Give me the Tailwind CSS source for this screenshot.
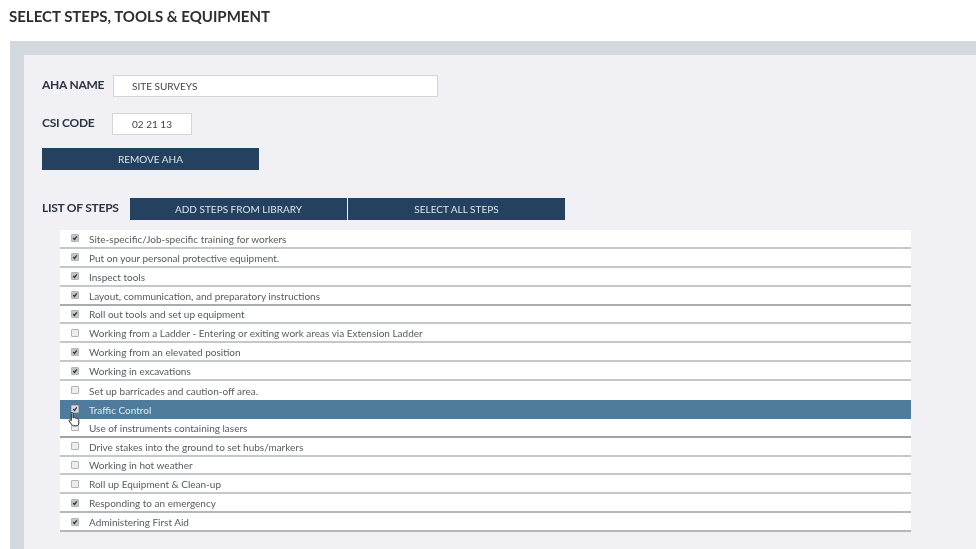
<!DOCTYPE html>
<html lang="en">
<head>
<meta charset="utf-8">
<title>Select Steps, Tools & Equipment</title>
<script src="https://cdn.jsdelivr.net/npm/@tailwindcss/browser@4"></script>
</head>
<body class="bg-white overflow-hidden font-['Lato','Liberation_Sans',sans-serif]">
<div class="w-[976px] h-[549px] overflow-hidden blur-[0.35px]">
  <h1 class="h-[41px] pl-[9px] pt-[7px] text-[15px] leading-[18px] font-bold text-[#2b2f33]">SELECT STEPS, TOOLS &amp; EQUIPMENT</h1>
  <div class="ml-[10px] h-[508px] bg-[#d3d7de] pl-[14px] pt-[14px]">
    <div class="h-[494px] bg-[#f0f0f5] pl-[18px] pt-[20px]">
      <div class="flex items-center h-[22px] gap-[8px]">
        <span class="w-[63px] pb-[2px] text-[12px] tracking-[-0.25px] font-bold text-[#2b3440] whitespace-nowrap">AHA NAME</span>
        <div class="w-[325px] h-[22px] bg-white border border-[#d4d6da] pl-[18px] text-[10px] leading-[20px] text-[#444]">SITE SURVEYS</div>
      </div>
      <div class="flex items-center h-[22px] gap-[8px] mt-[16px]">
        <span class="w-[62px] pb-[2px] text-[12px] tracking-[-0.25px] font-bold text-[#2b3440] whitespace-nowrap">CSI CODE</span>
        <div class="w-[80px] h-[22px] bg-white border border-[#d4d6da] text-center text-[10px] leading-[20px] text-[#444]">02 21 13</div>
      </div>
      <div class="w-[217px] h-[22px] mt-[13px] bg-[#24415f] text-center text-[10px] leading-[22px] text-[#dfe4ea]">REMOVE AHA</div>
      <div class="flex items-center h-[22px] mt-[28px]">
        <span class="w-[88px] pb-[2px] text-[12px] tracking-[-0.25px] font-bold text-[#2b3440] whitespace-nowrap">LIST OF STEPS</span>
        <div class="w-[217px] h-[22px] bg-[#24415f] text-center text-[10px] leading-[22px] text-[#dfe4ea]">ADD STEPS FROM LIBRARY</div>
        <div class="w-[217px] h-[22px] ml-[1px] bg-[#24415f] text-center text-[10px] leading-[22px] text-[#dfe4ea]">SELECT ALL STEPS</div>
      </div>
      <div class="relative ml-[18px] mt-[10px] w-[851px] flex flex-col text-[10px] text-[#555b60]">
        <div class="flex items-center h-[18.875px] bg-white border-b-2 border-[#c4c7cc] pl-[11px] gap-[10px]"><span class="flex items-center justify-center w-[8px] h-[8px] rounded-[1px] bg-[#c3c6ca] border border-[#b4b4b4]"><svg viewBox="0 0 10 10" class="w-[8px] h-[8px]"><path d="M2 5l2.2 2.4L8 2.2" fill="none" stroke="#2a2e33" stroke-width="2"/></svg></span><span class="pt-[2px]">Site-specific/Job-specific training for workers</span></div>
        <div class="flex items-center h-[18.875px] bg-white border-b-2 border-[#c4c7cc] pl-[11px] gap-[10px]"><span class="flex items-center justify-center w-[8px] h-[8px] rounded-[1px] bg-[#c3c6ca] border border-[#b4b4b4]"><svg viewBox="0 0 10 10" class="w-[8px] h-[8px]"><path d="M2 5l2.2 2.4L8 2.2" fill="none" stroke="#2a2e33" stroke-width="2"/></svg></span><span class="pt-[2px]">Put on your personal protective equipment.</span></div>
        <div class="flex items-center h-[18.875px] bg-white border-b-2 border-[#c4c7cc] pl-[11px] gap-[10px]"><span class="flex items-center justify-center w-[8px] h-[8px] rounded-[1px] bg-[#c3c6ca] border border-[#b4b4b4]"><svg viewBox="0 0 10 10" class="w-[8px] h-[8px]"><path d="M2 5l2.2 2.4L8 2.2" fill="none" stroke="#2a2e33" stroke-width="2"/></svg></span><span class="pt-[2px]">Inspect tools</span></div>
        <div class="flex items-center h-[18.875px] bg-white border-b-2 border-[#a9acb1] pl-[11px] gap-[10px]"><span class="flex items-center justify-center w-[8px] h-[8px] rounded-[1px] bg-[#c3c6ca] border border-[#b4b4b4]"><svg viewBox="0 0 10 10" class="w-[8px] h-[8px]"><path d="M2 5l2.2 2.4L8 2.2" fill="none" stroke="#2a2e33" stroke-width="2"/></svg></span><span class="pt-[2px]">Layout, communication, and preparatory instructions</span></div>
        <div class="flex items-center h-[18.875px] bg-white border-b-2 border-[#c4c7cc] pl-[11px] gap-[10px]"><span class="flex items-center justify-center w-[8px] h-[8px] rounded-[1px] bg-[#c3c6ca] border border-[#b4b4b4]"><svg viewBox="0 0 10 10" class="w-[8px] h-[8px]"><path d="M2 5l2.2 2.4L8 2.2" fill="none" stroke="#2a2e33" stroke-width="2"/></svg></span><span class="pt-[2px]">Roll out tools and set up equipment</span></div>
        <div class="flex items-center h-[18.875px] bg-white border-b-2 border-[#c4c7cc] pl-[11px] gap-[10px]"><span class="w-[8px] h-[8px] rounded-[1px] bg-[#eceded] border border-[#b4b4b4]"></span><span class="pt-[2px]">Working from a Ladder - Entering or exiting work areas via Extension Ladder</span></div>
        <div class="flex items-center h-[18.875px] bg-white border-b-2 border-[#c4c7cc] pl-[11px] gap-[10px]"><span class="flex items-center justify-center w-[8px] h-[8px] rounded-[1px] bg-[#c3c6ca] border border-[#b4b4b4]"><svg viewBox="0 0 10 10" class="w-[8px] h-[8px]"><path d="M2 5l2.2 2.4L8 2.2" fill="none" stroke="#2a2e33" stroke-width="2"/></svg></span><span class="pt-[2px]">Working from an elevated position</span></div>
        <div class="flex items-center h-[18.875px] bg-white border-b-2 border-[#c4c7cc] pl-[11px] gap-[10px]"><span class="flex items-center justify-center w-[8px] h-[8px] rounded-[1px] bg-[#c3c6ca] border border-[#b4b4b4]"><svg viewBox="0 0 10 10" class="w-[8px] h-[8px]"><path d="M2 5l2.2 2.4L8 2.2" fill="none" stroke="#2a2e33" stroke-width="2"/></svg></span><span class="pt-[2px]">Working in excavations</span></div>
        <div class="flex items-center h-[18.875px] bg-white pl-[11px] gap-[10px]"><span class="w-[8px] h-[8px] rounded-[1px] bg-[#eceded] border border-[#b4b4b4]"></span><span class="pt-[2px]">Set up barricades and caution-off area.</span></div>
        <div class="flex items-center h-[18.875px] bg-[#4f7c9c] pl-[11px] gap-[10px] text-[#dfe9f0]"><span class="flex items-center justify-center w-[8px] h-[8px] rounded-[1px] bg-[#d5d9dd] border border-[#b4b4b4]"><svg viewBox="0 0 10 10" class="w-[8px] h-[8px]"><path d="M2 5l2.2 2.4L8 2.2" fill="none" stroke="#2a2e33" stroke-width="2"/></svg></span><span class="pt-[2px]">Traffic Control</span></div>
        <div class="flex items-center h-[18.875px] bg-white border-b-2 border-[#a0a2a6] pl-[11px] gap-[10px]"><span class="w-[8px] h-[8px] rounded-[1px] bg-[#eceded] border border-[#b4b4b4]"></span><span class="pt-[2px]">Use of instruments containing lasers</span></div>
        <div class="flex items-center h-[18.875px] bg-white border-b-2 border-[#c4c7cc] pl-[11px] gap-[10px]"><span class="w-[8px] h-[8px] rounded-[1px] bg-[#eceded] border border-[#b4b4b4]"></span><span class="pt-[2px]">Drive stakes into the ground to set hubs/markers</span></div>
        <div class="flex items-center h-[18.875px] bg-white border-b-2 border-[#c4c7cc] pl-[11px] gap-[10px]"><span class="w-[8px] h-[8px] rounded-[1px] bg-[#eceded] border border-[#b4b4b4]"></span><span class="pt-[2px]">Working in hot weather</span></div>
        <div class="flex items-center h-[18.875px] bg-white border-b-2 border-[#c4c7cc] pl-[11px] gap-[10px]"><span class="w-[8px] h-[8px] rounded-[1px] bg-[#eceded] border border-[#b4b4b4]"></span><span class="pt-[2px]">Roll up Equipment &amp; Clean-up</span></div>
        <div class="flex items-center h-[18.875px] bg-white border-b-2 border-[#b4b7bb] pl-[11px] gap-[10px]"><span class="flex items-center justify-center w-[8px] h-[8px] rounded-[1px] bg-[#c3c6ca] border border-[#b4b4b4]"><svg viewBox="0 0 10 10" class="w-[8px] h-[8px]"><path d="M2 5l2.2 2.4L8 2.2" fill="none" stroke="#2a2e33" stroke-width="2"/></svg></span><span class="pt-[2px]">Responding to an emergency</span></div>
        <div class="flex items-center h-[18.875px] bg-white border-b-2 border-[#b4b7bb] pl-[11px] gap-[10px]"><span class="flex items-center justify-center w-[8px] h-[8px] rounded-[1px] bg-[#c3c6ca] border border-[#b4b4b4]"><svg viewBox="0 0 10 10" class="w-[8px] h-[8px]"><path d="M2 5l2.2 2.4L8 2.2" fill="none" stroke="#2a2e33" stroke-width="2"/></svg></span><span class="pt-[2px]">Administering First Aid</span></div>
        <svg viewBox="0 0 12 16" class="absolute left-[8px] top-[181px] w-[12px] h-[17px]"><path d="M3.2 1.2c.8-.6 1.8 0 1.8 1v4.2c.9-.4 1.7-.4 2.3.2.8-.2 1.4 0 1.7.6 1-.1 1.8.5 1.8 1.6v2.6c0 1.8-1 3-2.8 3H6c-1.1 0-1.8-.5-2.4-1.5L1.2 9.6c-.5-.9.6-1.8 1.4-1.1l.7.7V2.4c0-.5-.3-.9-.1-1.2z" fill="#fff" stroke="#1f2327" stroke-width="1"/></svg>
      </div>
    </div>
  </div>
</div>
</body>
</html>
